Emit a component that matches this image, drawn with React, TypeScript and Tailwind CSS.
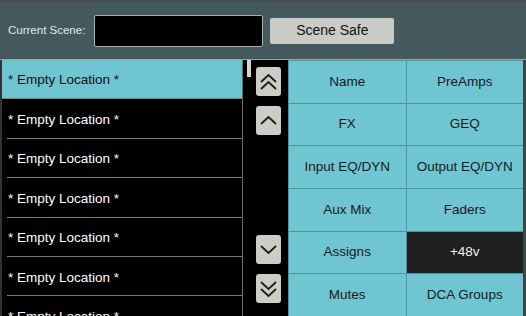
const rows = Array.from({ length: 7 }, (_, i) => i);

const tiles = [
  "Name",
  "PreAmps",
  "FX",
  "GEQ",
  "Input EQ/DYN",
  "Output EQ/DYN",
  "Aux Mix",
  "Faders",
  "Assigns",
  "+48v",
  "Mutes",
  "DCA Groups",
];

function Chevron({ dir, double }: { dir: "up" | "down"; double?: boolean }) {
  const one = dir === "up" ? "M5 11 L12.5 4 L20 11" : "M5 4 L12.5 11 L20 4";
  return (
    <svg width="25" height={double ? 21 : 15} viewBox={double ? "0 0 25 21" : "0 0 25 15"} fill="none">
      <path d={one} stroke="#1c1c1c" strokeWidth="1.8" />
      {double && <path d={one} stroke="#1c1c1c" strokeWidth="1.8" transform="translate(0,7)" />}
    </svg>
  );
}

function ScrollBtn({ dir, double }: { dir: "up" | "down"; double?: boolean }) {
  return (
    <div className="w-[25px] h-[29px] rounded-[3px] bg-[#cdcdc7] flex items-center justify-center">
      <Chevron dir={dir} double={double} />
    </div>
  );
}

export default function App() {
  return (
    <div className="w-[526px] h-[316px] overflow-hidden flex flex-col bg-[#43595d] font-['Liberation_Sans',Arial,sans-serif]">
      <div className="h-[60px] shrink-0 flex items-center border-t-2 border-[#4c4f51] border-b border-b-[#9aa5a7]">
        <span className="ml-[8px] text-[11.5px] text-[#e4e8e8]">Current Scene:</span>
        <div className="ml-[9px] w-[169px] h-[32px] bg-black border border-[#a9afaf] rounded-[2px]" />
        <button className="ml-[7px] w-[124px] h-[26px] bg-[#cbcbc5] rounded-[2px] text-[14px] text-[#111]">
          Scene Safe
        </button>
      </div>
      <div className="flex-1 flex min-h-0 border-r-[3px] border-[#3b4649]">
        <div className="w-[243px] shrink-0 bg-black border-l-2 border-[#2e3436] border-r border-r-[#6b6b6b] flex flex-col">
          {rows.map((i) => (
            <div
              key={i}
              className={
                i === 0
                  ? "h-[39.4px] shrink-0 flex items-center pl-[6px] pt-[2px] bg-[#6ec4d1] text-[#111] text-[13.5px] border-b border-[#7a8587]"
                  : "h-[39.4px] shrink-0 flex items-center pl-[6px] pt-[2px] text-white text-[13.5px] relative"
              }
            >
              * Empty Location *
              {i > 0 && <div className="absolute left-[5px] right-0 bottom-0 h-px bg-[#7a7a7a]" />}
            </div>
          ))}
        </div>
        <div className="w-[45px] shrink-0 bg-black relative flex flex-col justify-between pt-[7px] pb-[13px] pl-[13px]">
          <div className="absolute left-[4px] top-0 w-[4px] h-[17px] bg-[#d4d4d0]" />
          <div className="flex flex-col gap-[10px]">
            <ScrollBtn dir="up" double />
            <ScrollBtn dir="up" />
          </div>
          <div className="flex flex-col gap-[10px]">
            <ScrollBtn dir="down" />
            <ScrollBtn dir="down" double />
          </div>
        </div>
        <div className="flex-1 grid grid-cols-2 grid-rows-6 bg-[#4e949e] gap-px border-l border-[#4e949e] pt-px">
          {tiles.map((t) => (
            <div
              key={t}
              className={
                t === "+48v"
                  ? "flex items-center justify-center bg-[#1f1f1f] text-[#f0f0f0] text-[13.5px]"
                  : "flex items-center justify-center bg-[#6fc5d2] text-[#1a1a1a] text-[13.5px]"
              }
            >
              {t}
            </div>
          ))}
        </div>
      </div>
    </div>
  );
}
